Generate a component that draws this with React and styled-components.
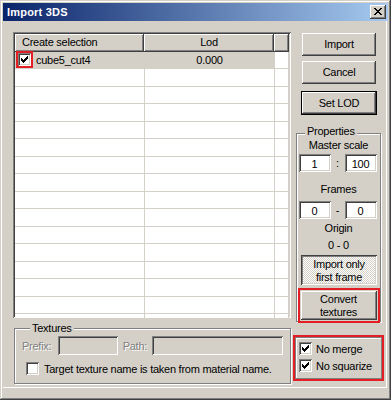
// Import the everything
import React from 'react';
import styled, { createGlobalStyle } from 'styled-components';

// Base page styles
const GlobalStyle = createGlobalStyle`
    html, body {
        margin: 0;
        padding: 0;
        background: #d4d0c8;
    }
    body {
        font-family: "Liberation Sans", Arial, sans-serif;
        font-size: 11px;
        letter-spacing: -0.25px;
        color: #000;
    }
    * {
        box-sizing: border-box;
    }
`;

const raised = `
    box-shadow: inset -1px -1px #404040, inset 1px 1px #fff,
        inset -2px -2px #808080, inset 2px 2px #d4d0c8;
`;

const sunken = `
    box-shadow: inset 1px 1px #808080, inset -1px -1px #fff,
        inset 2px 2px #404040, inset -2px -2px #d4d0c8;
`;

// Styling components
const Window = styled.div`
    width: 391px;
    height: 400px;
    padding: 3px;
    background: #d4d0c8;
    box-shadow: inset -1px -1px #404040, inset 1px 1px #d4d0c8,
        inset -2px -2px #808080, inset 2px 2px #fff;
    display: flex;
    flex-direction: column;
`;

const TitleBar = styled.div`
    height: 18px;
    flex-shrink: 0;
    padding: 0 2px 0 4px;
    background: linear-gradient(to right, #0a246a, #a6caf0);
    color: #fff;
    font-weight: bold;
    font-size: 11px;
    letter-spacing: 0.2px;
    display: flex;
    align-items: center;
`;

const CloseButton = styled.div`
    width: 16px;
    height: 14px;
    margin-left: auto;
    background: #d4d0c8;
    ${raised}
    display: flex;
    align-items: center;
    justify-content: center;
    padding: 0 1px 1px 0;
`;

const Client = styled.div`
    flex: 1;
    display: flex;
    padding: 11px 0 0 10px;
    margin: 0 1px 9px 0;
    border-right: 1px solid #fff;
    border-bottom: 1px solid #fff;
`;

const LeftColumn = styled.div`
    width: 278px;
    display: flex;
    flex-direction: column;
`;

const RightColumn = styled.div`
    flex: 1;
    display: flex;
    flex-direction: column;
    align-items: flex-start;
`;

const List = styled.div`
    height: 286px;
    padding: 2px;
    background: #fff;
    ${sunken}
    display: flex;
    flex-direction: column;
    overflow: hidden;
`;

const HeaderRow = styled.div`
    display: flex;
    height: 17.5px;
    flex-shrink: 0;
`;

const HeaderCell = styled.div`
    width: ${p => p.w ? `${p.w}px` : 'auto'};
    flex: ${p => p.w ? 'none' : 1};
    background: #d4d0c8;
    ${raised}
    line-height: 17.5px;
    text-align: ${p => p.align || 'left'};
    padding-left: ${p => p.align === 'center' ? 0 : 7}px;
    white-space: nowrap;
`;

const Row = styled.div`
    display: flex;
    height: 17.5px;
    flex-shrink: 0;
`;

const Cell = styled.div`
    width: ${p => p.w ? `${p.w}px` : 'auto'};
    flex: ${p => p.w ? 'none' : 1};
    background: ${p => p.selected ? '#d4d0c8' : '#fff'};
    border-right: 1px solid #d4d0c8;
    border-bottom: 1px solid #d4d0c8;
    display: flex;
    align-items: center;
    justify-content: ${p => p.align === 'center' ? 'center' : 'flex-start'};
    padding-left: ${p => p.align === 'center' ? 0 : 3}px;
    white-space: nowrap;
`;

const CheckBox = styled.div`
    width: 13px;
    height: 13px;
    flex-shrink: 0;
    background: #fff;
    ${sunken}
    display: flex;
    align-items: center;
    justify-content: center;
    outline: ${p => p.marked ? '2px solid #e31e24' : 'none'};
`;

const CheckText = styled.span`
    margin-left: ${p => p.gap || 5}px;
    white-space: nowrap;
`;

const Group = styled.div`
    border: 1px solid #808080;
    box-shadow: inset 1px 1px #fff, 1px 1px #fff;
    display: flex;
    flex-direction: column;
`;

const Caption = styled.div`
    align-self: flex-start;
    margin: ${p => p.top || -7}px 0 0 8px;
    padding: 0 2px;
    line-height: 13px;
    background: #d4d0c8;
`;

const TexturesGroup = styled(Group)`
    margin: 10px 0 0 1px;
    width: 277px;
    padding: 0 7px 8px 7px;
`;

const FieldRow = styled.div`
    display: flex;
    align-items: center;
    height: 19px;
    margin-top: 1px;
`;

const DisabledLabel = styled.span`
    width: ${p => p.w}px;
    margin-left: ${p => p.gap || 0}px;
    color: #808080;
    text-shadow: 1px 1px #fff;
`;

const TextBox = styled.div`
    width: ${p => p.w}px;
    height: ${p => p.h || 19}px;
    background: ${p => p.disabled ? '#d4d0c8' : '#fff'};
    ${sunken}
    display: flex;
    align-items: center;
    justify-content: center;
    padding-top: 1px;
`;

const CheckRow = styled.div`
    display: flex;
    align-items: center;
    height: ${p => p.h || 13}px;
    margin-top: ${p => p.top || 0}px;
    padding-left: ${p => p.indent || 0}px;
`;

const Button = styled.div`
    width: ${p => p.w || 74}px;
    height: ${p => p.h || 23}px;
    margin-top: ${p => p.top || 0}px;
    margin-left: ${p => p.left || 0}px;
    flex-shrink: 0;
    background: #d4d0c8;
    ${raised}
    display: flex;
    align-items: center;
    justify-content: center;
    text-align: center;
    line-height: 13px;
`;

const DefaultButton = styled(Button)`
    border: 1px solid #000;
`;

const ToggleButton = styled(Button)`
    background-color: #fff;
    background-image: conic-gradient(#fff 25%, #d4d0c8 0 50%, #fff 0 75%, #d4d0c8 0);
    background-size: 2px 2px;
    box-shadow: inset 1px 1px #404040, inset -1px -1px #fff,
        inset 2px 2px #808080, inset -2px -2px #d4d0c8;
    padding: 1px 0 0 1px;
`;

const MarkedButton = styled(Button)`
    outline: 2px solid #e31e24;
    outline-offset: 1px;
`;

const PropertiesGroup = styled(Group)`
    margin: 18px 0 0 5px;
    width: 85px;
    padding-bottom: 1px;
    align-items: center;
`;

const PropLabel = styled.div`
    line-height: 13px;
    margin-top: ${p => p.top || 0}px;
`;

const PairRow = styled.div`
    display: flex;
    align-items: center;
    margin: ${p => p.top || 0}px 2px 0 0;
`;

const Sep = styled.span`
    width: 14px;
    text-align: center;
`;

const OptionsGroup = styled(Group)`
    margin: 15px 0 0 4px;
    width: 87px;
    padding: 3px 0 5px 3px;
    outline: 2px solid #e31e24;
`;

// Little pixel drawings
const CheckMark = () => (
    <svg width="7" height="7" viewBox="0 0 7 7" shapeRendering="crispEdges">
        <path fill="#000" d="M6 0h1v1h-1z M5 1h2v1h-2z M0 2h1v1h-1z M4 2h3v1h-3z M0 3h2v1h-2z M3 3h3v1h-3z M0 4h5v1h-5z M1 5h3v1h-3z M2 6h1v1h-1z" />
    </svg>
);

const CloseIcon = () => (
    <svg width="8" height="7" viewBox="0 0 8 7" shapeRendering="crispEdges">
        <path fill="#000" d="M0 0h2v1h-2z M6 0h2v1h-2z M1 1h2v1h-2z M5 1h2v1h-2z M2 2h4v1h-4z M3 3h2v1h-2z M2 4h4v1h-4z M1 5h2v1h-2z M5 5h2v1h-2z M0 6h2v1h-2z M6 6h2v1h-2z" />
    </svg>
);

const emptyRows = Array.from({ length: 15 });

// Export component
export default function App() {
    return (
        <>
            <GlobalStyle />
            <Window>
                <TitleBar>
                    Import 3DS
                    <CloseButton><CloseIcon /></CloseButton>
                </TitleBar>
                <Client>
                    <LeftColumn>
                        <List>
                            <HeaderRow>
                                <HeaderCell w={129}>Create selection</HeaderCell>
                                <HeaderCell w={130} align='center'>Lod</HeaderCell>
                                <HeaderCell />
                            </HeaderRow>
                            <Row>
                                <Cell w={130} selected>
                                    <CheckBox marked><CheckMark /></CheckBox>
                                    <CheckText>cube5_cut4</CheckText>
                                </Cell>
                                <Cell w={130} selected align='center'>0.000</Cell>
                                <Cell />
                            </Row>
                            {emptyRows.map((_, i) => (
                                <Row key={i}>
                                    <Cell w={130} />
                                    <Cell w={130} />
                                    <Cell />
                                </Row>
                            ))}
                        </List>
                        <TexturesGroup>
                            <Caption>Textures</Caption>
                            <FieldRow>
                                <DisabledLabel w={36}>Prefix:</DisabledLabel>
                                <TextBox w={60} disabled />
                                <DisabledLabel w={29} gap={5}>Path:</DisabledLabel>
                                <TextBox w={132} disabled />
                            </FieldRow>
                            <CheckRow top={7} indent={4}>
                                <CheckBox />
                                <CheckText>Target texture name is taken from material name.</CheckText>
                            </CheckRow>
                        </TexturesGroup>
                    </LeftColumn>
                    <RightColumn>
                        <Button top={1} left={11}>Import</Button>
                        <Button top={5} left={11}>Cancel</Button>
                        <DefaultButton top={7} left={10} w={76} h={24}>Set LOD</DefaultButton>
                        <PropertiesGroup>
                            <Caption top={-9}>Properties</Caption>
                            <PropLabel top={1}>Master scale</PropLabel>
                            <PairRow top={2}>
                                <TextBox w={32} h={18}>1</TextBox>
                                <Sep>:</Sep>
                                <TextBox w={32} h={18}>100</TextBox>
                            </PairRow>
                            <PropLabel top={11}>Frames</PropLabel>
                            <PairRow top={5}>
                                <TextBox w={32} h={18}>0</TextBox>
                                <Sep>-</Sep>
                                <TextBox w={32} h={18}>0</TextBox>
                            </PairRow>
                            <PropLabel top={3}>Origin</PropLabel>
                            <PropLabel top={4}>0 - 0</PropLabel>
                            <ToggleButton top={3} w={76} h={30}>Import only<br />first frame</ToggleButton>
                            <MarkedButton top={6} w={76} h={29}>Convert<br />textures</MarkedButton>
                        </PropertiesGroup>
                        <OptionsGroup>
                            <CheckRow h={15}>
                                <CheckBox><CheckMark /></CheckBox>
                                <CheckText gap={4}>No merge</CheckText>
                            </CheckRow>
                            <CheckRow h={15} top={2}>
                                <CheckBox><CheckMark /></CheckBox>
                                <CheckText gap={4}>No squarize</CheckText>
                            </CheckRow>
                        </OptionsGroup>
                    </RightColumn>
                </Client>
            </Window>
        </>
    );
};
